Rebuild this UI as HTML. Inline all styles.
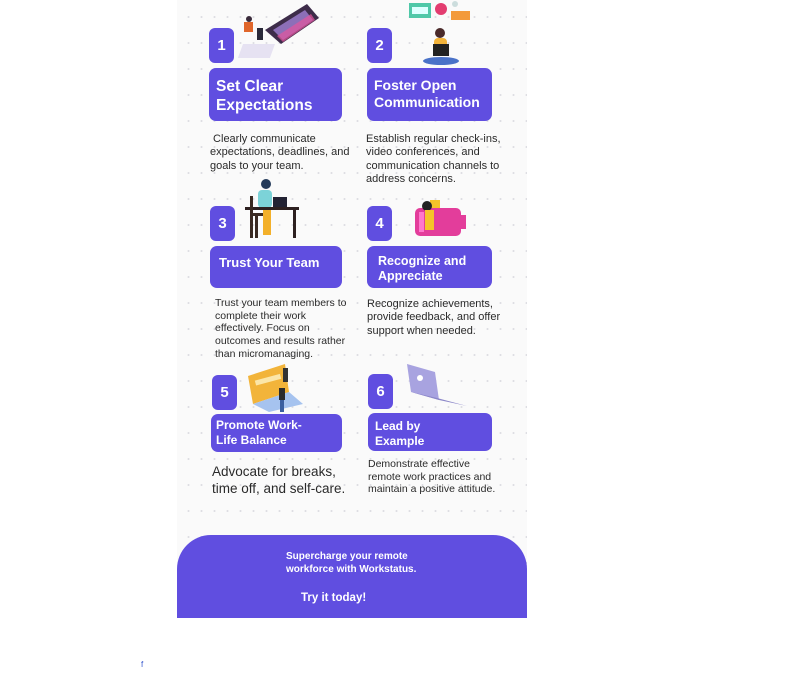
<!DOCTYPE html>
<html><head><meta charset="utf-8">
<style>
*{margin:0;padding:0;box-sizing:border-box}
body{width:811px;height:674px;background:#fff;position:relative;overflow:hidden;font-family:"Liberation Sans",sans-serif}
#card{position:absolute;left:177px;top:0;width:350px;height:618px;background-color:#fafafa;
background-image:radial-gradient(circle,#dedee3 0.8px,transparent 1.2px);background-size:13px 26px;background-position:5px 4px;overflow:hidden}
.n{position:absolute;width:25px;height:35px;background:#604ee0;border-radius:6px;color:#fff;font-weight:bold;font-size:15px;text-align:center;line-height:35px}
.t{position:absolute;background:#604ee0;border-radius:7px;color:#fff;font-weight:bold;padding-left:7px}
.d{position:absolute;color:#2a2a2a;font-size:11px;line-height:13.3px}
#cta{position:absolute;left:0;top:535px;width:350px;height:83px;background:#604ee0;border-radius:34px 34px 0 0;color:#fff;font-weight:bold}
</style></head><body>
<div id="card">
<svg style="position:absolute;left:60px;top:0" width="90" height="65">
<polygon points="28,30 70,4 82,18 44,44" fill="#3d2c4a"/>
<polygon points="36,30 68,10 76,20 46,40" fill="#8c6fb8"/>
<polygon points="40,36 74,14 78,20 46,42" fill="#e2559d" opacity=".7"/>
<rect x="22" y="44" width="32" height="14" fill="#e6e2f2" transform="skewX(-20)"/>
<circle cx="12" cy="19" r="3" fill="#3a2b3b"/><rect x="7" y="22" width="9" height="10" fill="#e0662b"/>
<rect x="20" y="28" width="6" height="12" fill="#2a2a3a"/>
</svg>
<svg style="position:absolute;left:228px;top:0" width="75" height="66">
<rect x="4" y="3" width="22" height="15" fill="#4fc8a8"/><rect x="7" y="7" width="16" height="7" fill="#dff"/>
<circle cx="36" cy="9" r="6" fill="#e33d70"/><circle cx="50" cy="4" r="3" fill="#cdd"/>
<rect x="46" y="11" width="19" height="9" fill="#f39a3b"/>
<circle cx="35" cy="33" r="5" fill="#4a2a2a"/><rect x="29" y="38" width="13" height="14" rx="4" fill="#f3b43b"/>
<rect x="28" y="44" width="16" height="12" fill="#222"/><ellipse cx="36" cy="61" rx="18" ry="4" fill="#4a72c8"/>
</svg>
<svg style="position:absolute;left:68px;top:178px" width="56" height="64">
<circle cx="21" cy="6" r="5" fill="#243a5a"/><rect x="13" y="12" width="14" height="18" rx="4" fill="#7cd3d8"/>
<rect x="0" y="29" width="54" height="3" fill="#2d2020"/><rect x="28" y="19" width="14" height="10" fill="#223"/>
<rect x="5" y="18" width="3" height="42" fill="#3a2a22"/><rect x="5" y="35" width="14" height="3" fill="#3a2a22"/><rect x="10" y="38" width="3" height="22" fill="#3a2a22"/>
<rect x="18" y="32" width="8" height="25" fill="#f3b02a"/><rect x="48" y="32" width="3" height="28" fill="#2d2020"/>
</svg>
<svg style="position:absolute;left:228px;top:182px" width="68" height="60">
<rect x="10" y="26" width="46" height="28" rx="5" fill="#e33d9b"/><rect x="56" y="33" width="5" height="14" fill="#e33d9b"/>
<rect x="14" y="30" width="5" height="20" fill="#f7c"/>
<rect x="25" y="18" width="10" height="8" fill="#f5c32a"/><circle cx="22" cy="24" r="5" fill="#222"/>
<rect x="20" y="28" width="9" height="20" fill="#f5c32a"/>
</svg>
<svg style="position:absolute;left:68px;top:362px" width="62" height="50">
<polygon points="3,14 40,2 44,30 8,42" fill="#f2b43a"/><rect x="10" y="16" width="26" height="5" fill="#fbe6a8" transform="rotate(-15 20 18)"/>
<polygon points="8,42 44,30 58,42 24,50" fill="#a6c3ef"/>
<rect x="38" y="6" width="5" height="14" fill="#333"/><rect x="34" y="26" width="6" height="12" fill="#2b2b2b"/><rect x="35" y="38" width="4" height="12" fill="#3b5fa0"/>
</svg>
<svg style="position:absolute;left:226px;top:360px" width="68" height="50">
<polygon points="4,4 32,12 36,40 8,32" fill="#a8a3e0"/><circle cx="17" cy="18" r="3" fill="#fff"/>
<polygon points="8,32 36,40 64,46 34,38" fill="#8b86c8"/>
</svg>

<div class="n" style="left:32px;top:28px">1</div>
<div class="t" style="left:32px;top:68px;width:133px;height:53px;font-size:15.5px;line-height:19px;padding-top:9px">Set Clear<br>Expectations</div>
<div class="d" style="left:33px;top:133px">&nbsp;Clearly communicate<br>expectations, deadlines, and<br>goals to your team.</div>

<div class="n" style="left:190px;top:28px">2</div>
<div class="t" style="left:190px;top:68px;width:125px;height:53px;font-size:14px;line-height:17px;padding-top:9px">Foster Open<br>Communication</div>
<div class="d" style="left:189px;top:133px">Establish regular check-ins,<br>video conferences, and<br>communication channels to<br>address concerns.</div>

<div class="n" style="left:33px;top:206px">3</div>
<div class="t" style="left:33px;top:246px;width:132px;height:42px;font-size:13px;line-height:16px;padding-top:9px;padding-left:9px">Trust Your Team</div>
<div class="d" style="left:38px;top:297px;font-size:10.5px;line-height:12.7px">Trust your team members to<br>complete their work<br>effectively. Focus on<br>outcomes and results rather<br>than micromanaging.</div>

<div class="n" style="left:190px;top:206px">4</div>
<div class="t" style="left:190px;top:246px;width:125px;height:42px;font-size:12.5px;line-height:14.5px;padding-top:8px;padding-left:11px">Recognize and<br>Appreciate</div>
<div class="d" style="left:190px;top:298px">Recognize achievements,<br>provide feedback, and offer<br>support when needed.</div>

<div class="n" style="left:35px;top:375px">5</div>
<div class="t" style="left:34px;top:414px;width:131px;height:38px;font-size:12px;line-height:14.5px;padding-top:4px;padding-left:5px">Promote Work-<br>Life Balance</div>
<div class="d" style="left:35px;top:464px;font-size:13.5px;line-height:16.5px">Advocate for breaks,<br>time off, and self-care.</div>

<div class="n" style="left:191px;top:374px">6</div>
<div class="t" style="left:191px;top:413px;width:124px;height:38px;font-size:12px;line-height:14.5px;padding-top:6px">Lead by<br>Example</div>
<div class="d" style="left:191px;top:458px;font-size:10.5px;line-height:12.7px">Demonstrate effective<br>remote work practices and<br>maintain a positive attitude.</div>

<div id="cta">
<div style="position:absolute;left:109px;top:16px;font-size:10px;line-height:12.5px">Supercharge your remote<br>workforce with Workstatus.</div>
<div style="position:absolute;left:124px;top:57px;font-size:11.5px">Try it today!</div>
</div>
</div>
<div style="position:absolute;left:141px;top:660px;font-size:8px;color:#3355cc">f</div>
</body></html>
